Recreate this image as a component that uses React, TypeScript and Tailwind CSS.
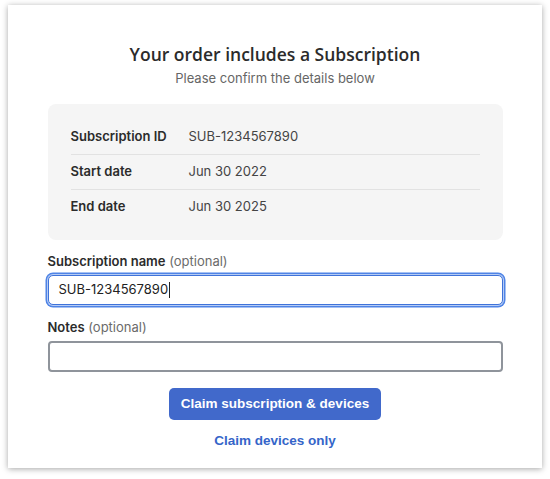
import React from "react";

export default function App() {
  const rows = [
    ["Subscription ID", "SUB-1234567890"],
    ["Start date", "Jun 30 2022"],
    ["End date", "Jun 30 2025"],
  ];
  return (
    <div className="w-[550px] h-[479px] bg-white pt-[5px] pl-[8px]" style={{ fontFamily: "Inter, 'Liberation Sans', sans-serif" }}>
      <div className="w-[534px] h-[463px] bg-white shadow-[0_1px_6px_rgba(0,0,0,0.35)] flex flex-col items-center">
        <h1 className="mt-[38px] text-[17.5px] leading-[22px] text-[#2b2b2b]" style={{ fontFamily: "'Open Sans', 'Liberation Sans', sans-serif", fontWeight: 600 }}>
          Your order includes a Subscription
        </h1>
        <p className="mt-[4px] text-[13px] leading-[18px] text-[#666]">Please confirm the details below</p>
        <div className="mt-[17px] w-[455px] bg-[#f5f5f5] rounded-[8px] px-[23px] pt-[15px] pb-[16px]">
          {rows.map(([l, v], i) => (
            <div key={l} className={`flex items-center h-[35px] text-[13px] ${i > 0 ? "border-t border-[#e2e2e2]" : ""}`}>
              <span className="w-[118px] font-semibold text-[#2b2b2b]">{l}</span>
              <span className="text-[#444]">{v}</span>
            </div>
          ))}
        </div>
        <div className="w-[455px] mt-[12px]">
          <div className="text-[13px] leading-[18px]">
            <span className="font-semibold text-[#2b2b2b]">Subscription name</span>{" "}
            <span className="text-[#6b6b6b]">(optional)</span>
          </div>
          <div className="mt-[5px] h-[30px] rounded-[5px] border border-[#3f73d9] shadow-[0_0_0_1px_#b6ccf5,0_0_0_2.5px_#4f84e6] flex items-center px-[10px] text-[13px] text-[#222]">
            SUB-1234567890<span className="inline-block w-[1px] h-[16px] bg-[#222] ml-[1px]" />
          </div>
          <div className="mt-[13px] text-[13px] leading-[18px]">
            <span className="font-semibold text-[#2b2b2b]">Notes</span>{" "}
            <span className="text-[#6b6b6b]">(optional)</span>
          </div>
          <div className="mt-[5px] h-[31px] rounded-[4px] border-2 border-[#8f949b]" />
        </div>
        <button className="mt-[16px] h-[32px] w-[212px] rounded-[5px] bg-[#4169cb] text-white text-[13.5px]" style={{ fontFamily: "'Liberation Sans', Arial, sans-serif", fontWeight: 700 }}>
          Claim subscription &amp; devices
        </button>
        <div className="mt-[13px] text-[13.5px] leading-[16px] font-bold text-[#3565c9]" style={{ fontFamily: "'Liberation Sans', Arial, sans-serif" }}>
          Claim devices only
        </div>
      </div>
    </div>
  );
}
